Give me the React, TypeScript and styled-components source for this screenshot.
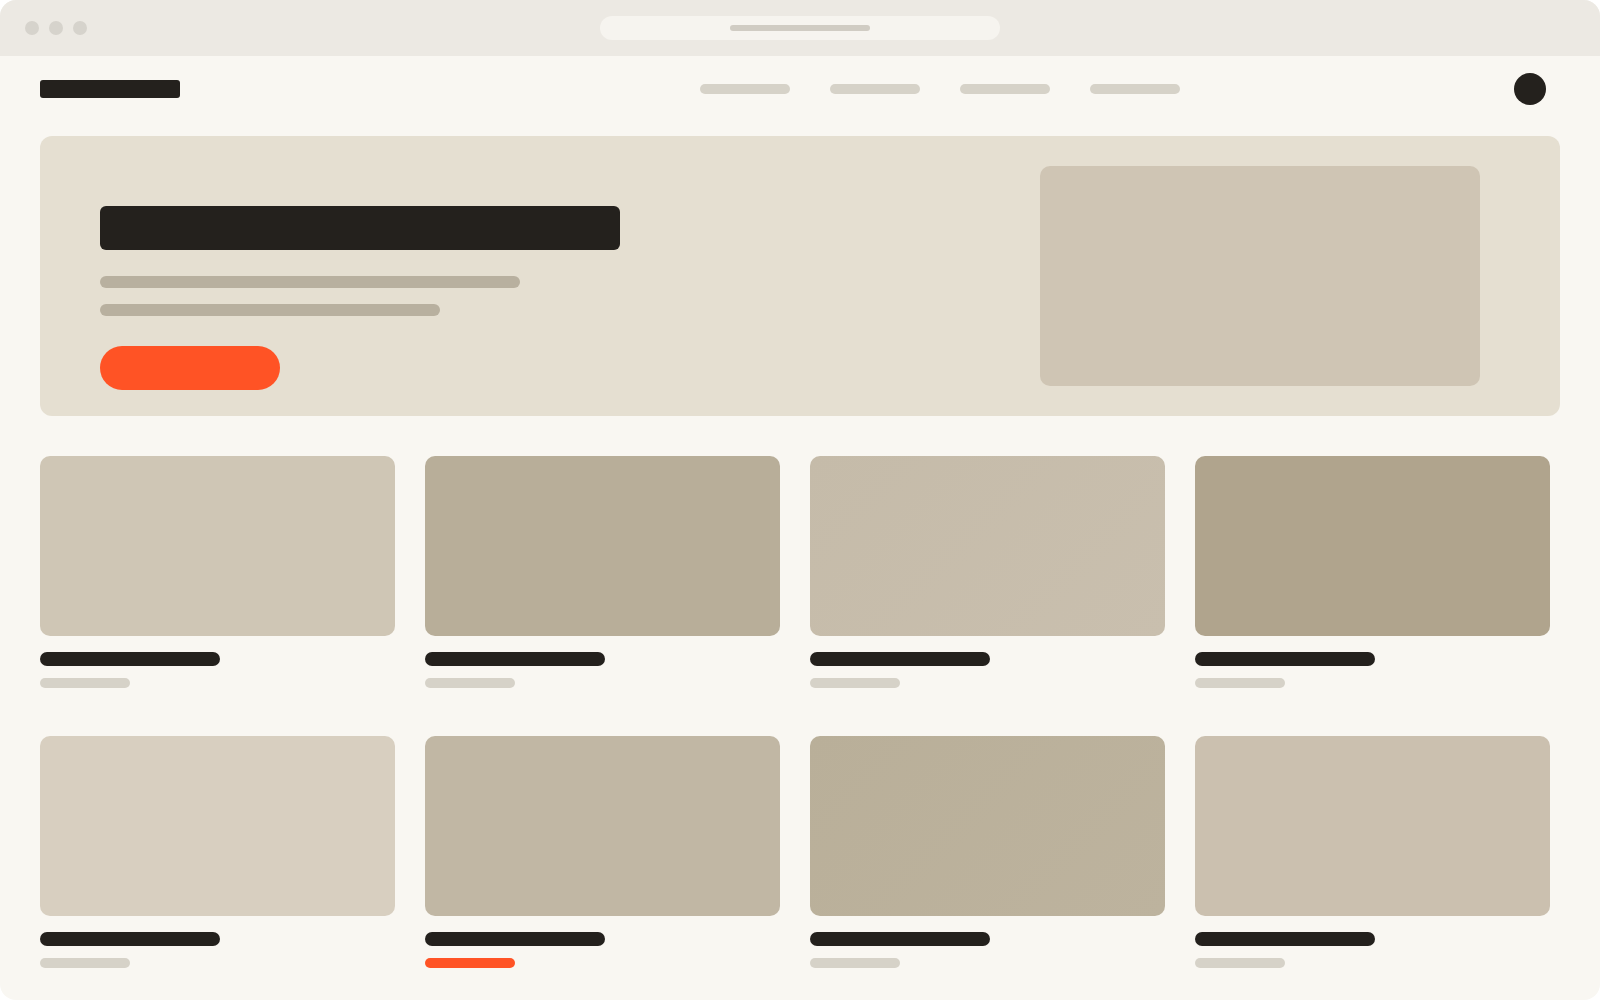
import React from 'react'
import styled, { createGlobalStyle } from 'styled-components'

const GlobalStyle = createGlobalStyle`
    html, body {
        margin: 0;
        padding: 0;
        background: #ffffff;
        font-family: "Inter", "Liberation Sans", sans-serif;
    }
    * {
        box-sizing: border-box;
    }
`

const Window = styled.div`
    width: 1600px;
    height: 1000px;
    border-radius: 16px;
    overflow: hidden;
    background-color: #f9f7f2;
`

const TitleBar = styled.div`
    height: 56px;
    background-color: #ece9e3;
    display: grid;
    grid-template-columns: 1fr 400px 1fr;
    align-items: center;
`

const Dots = styled.div`
    display: flex;
    gap: 10px;
    padding-left: 25px;
`

const Dot = styled.span`
    width: 14px;
    height: 14px;
    border-radius: 50%;
    background-color: #d6d3cc;
`

const UrlBar = styled.div`
    height: 24px;
    border-radius: 12px;
    background-color: #f6f4ef;
    display: flex;
    align-items: center;
    justify-content: center;
`

const UrlText = styled.span`
    width: 140px;
    height: 6px;
    border-radius: 3px;
    background-color: #d0ccc3;
`

const Nav = styled.nav`
    height: 66px;
    display: flex;
    align-items: center;
    padding: 0 54px 0 40px;
`

const Logo = styled.div`
    width: 140px;
    height: 18px;
    border-radius: 3px;
    background-color: #24211d;
`

const NavLinks = styled.div`
    display: flex;
    gap: 40px;
    margin-left: 520px;
`

const NavLink = styled.span`
    width: 90px;
    height: 10px;
    border-radius: 5px;
    background-color: #d6d2c8;
`

const Avatar = styled.div`
    width: 32px;
    height: 32px;
    border-radius: 50%;
    background-color: #24211d;
    margin-left: auto;
`

const Main = styled.main`
    padding: 14px 40px 0 40px;
`

const Hero = styled.section`
    height: 280px;
    border-radius: 12px;
    background-color: #e5dfd1;
    display: flex;
    justify-content: space-between;
    align-items: flex-start;
    padding: 30px 80px 30px 60px;
`

const HeroText = styled.div`
    display: flex;
    flex-direction: column;
    align-items: flex-start;
    padding-top: 40px;
`

const HeroTitle = styled.div`
    width: 520px;
    height: 44px;
    border-radius: 6px;
    background-color: #24211d;
    margin-bottom: 26px;
`

const HeroLine = styled.div<{ $w: number }>`
    width: ${p => p.$w}px;
    height: 12px;
    border-radius: 6px;
    background-color: #b8b09f;
    margin-bottom: 16px;

    &:last-of-type {
        margin-bottom: 30px;
    }
`

const CtaButton = styled.button`
    width: 180px;
    height: 44px;
    border: none;
    border-radius: 22px;
    background-color: #ff5325;
    padding: 0;
`

const HeroImage = styled.div`
    width: 440px;
    height: 220px;
    border-radius: 10px;
    background-color: #cfc5b4;
`

const Grid = styled.section`
    margin-top: 40px;
    display: grid;
    grid-template-columns: repeat(4, 355px);
    column-gap: 30px;
    row-gap: 48px;
`

const Card = styled.article`
    display: flex;
    flex-direction: column;
    align-items: flex-start;
`

const Thumb = styled.div<{ $bg: string }>`
    width: 100%;
    height: 180px;
    border-radius: 10px;
    background: ${p => p.$bg};
`

const CardTitle = styled.div`
    width: 180px;
    height: 14px;
    border-radius: 7px;
    background-color: #24211d;
    margin-top: 16px;
`

const CardMeta = styled.div<{ $accent?: boolean }>`
    width: 90px;
    height: 10px;
    border-radius: 5px;
    background-color: ${p => (p.$accent ? '#ff5325' : '#d6d2c8')};
    margin-top: 12px;
`

const cards = [
    { bg: '#cfc6b5' },
    { bg: '#b8ae99' },
    { bg: 'linear-gradient(135deg, #c5bba9, #c9bfae)' },
    { bg: '#b0a48d' },
    { bg: '#d8cfc0' },
    { bg: '#c1b7a4', accent: true },
    { bg: 'linear-gradient(135deg, #b9af99, #bdb39e)' },
    { bg: '#cbc0af' },
]

export default function App() {
    return (
        <>
            <GlobalStyle />
            <Window>
                <TitleBar>
                    <Dots>
                        <Dot />
                        <Dot />
                        <Dot />
                    </Dots>
                    <UrlBar>
                        <UrlText />
                    </UrlBar>
                </TitleBar>
                <Nav>
                    <Logo />
                    <NavLinks>
                        <NavLink />
                        <NavLink />
                        <NavLink />
                        <NavLink />
                    </NavLinks>
                    <Avatar />
                </Nav>
                <Main>
                    <Hero>
                        <HeroText>
                            <HeroTitle />
                            <HeroLine $w={420} />
                            <HeroLine $w={340} />
                            <CtaButton aria-label="Get started" />
                        </HeroText>
                        <HeroImage />
                    </Hero>
                    <Grid>
                        {cards.map((c, i) => (
                            <Card key={i}>
                                <Thumb $bg={c.bg} />
                                <CardTitle />
                                <CardMeta $accent={c.accent} />
                            </Card>
                        ))}
                    </Grid>
                </Main>
            </Window>
        </>
    )
}
